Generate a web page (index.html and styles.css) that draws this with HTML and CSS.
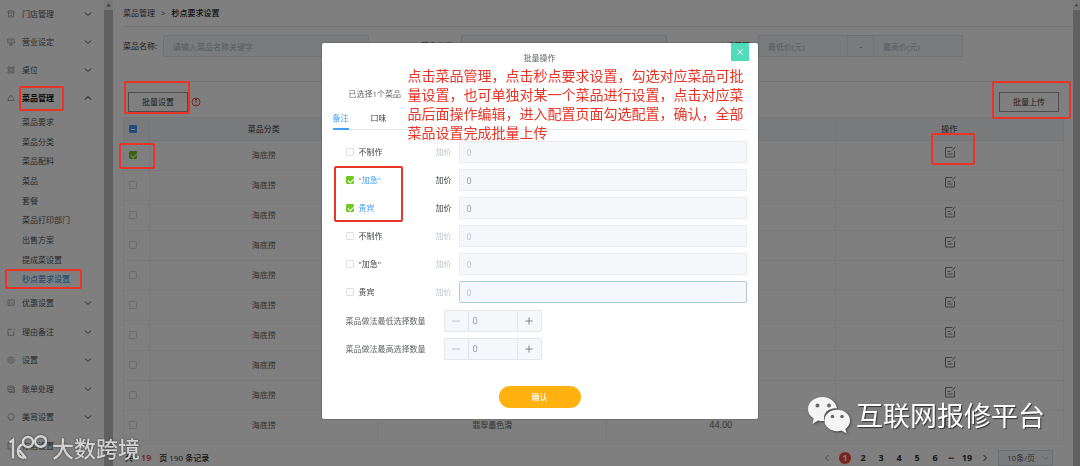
FILE: index.html
```html
<!DOCTYPE html>
<html>
<head>
<meta charset="utf-8">
<title>秒点要求设置</title>
<link rel="stylesheet" href="styles.css">
</head>
<body>
<svg class="defs" aria-hidden="true">
  <symbol id="down" viewBox="0 0 8 8"><path d="M1 2.5 4 5.5 7 2.5"/></symbol>
  <symbol id="up" viewBox="0 0 8 8"><path d="M1 5.5 4 2.5 7 5.5"/></symbol>
  <symbol id="edit" viewBox="0 0 12 12"><path d="M8.500 1.500H1.500v9.500H10.500V5M11.500.6 8 4.600M3.500 5.500h3M3.500 8h5"/></symbol>
</svg>

<div class="app">
  <nav class="sidebar">
    <div class="menu">
      <button class="group"><svg class="ico" viewBox="0 0 8 8"><path d="M1 1h6v2H1zM1.500 3v4h5V3M3 5l1 1 1-1"/></svg><span>门店管理</span><svg class="chev"><use href="#down"/></svg></button>
      <button class="group"><svg class="ico" viewBox="0 0 8 8"><path d="M.8 1h6.500v4H.8zM4 5v2M2 7h4M2.500 3h3"/></svg><span>营业设定</span><svg class="chev"><use href="#down"/></svg></button>
      <button class="group"><svg class="ico" viewBox="0 0 8 8"><path d="M1 1h2.200v2.200H1zM4.800 1H7v2.200H4.800zM1 4.800h2.200V7H1zM4.800 4.800H7V7H4.800z"/></svg><span>桌位</span><svg class="chev"><use href="#down"/></svg></button>
      <button class="group active"><svg class="ico" viewBox="0 0 8 8"><path d="M.5 6.500h7M1.200 6.300C1.200 3.500 2.500 2 4 2s2.800 1.500 2.800 4.300M4 2V1"/></svg><span class="mark mark-menu">菜品管理</span><svg class="chev"><use href="#up"/></svg></button>
    </div>
    <div class="submenu">
      <a href="#">菜品要求</a><a href="#">菜品分类</a><a href="#">菜品配料</a><a href="#">菜品</a><a href="#">套餐</a><a href="#">菜品打印部门</a><a href="#">出售方案</a><a href="#">提成菜设置</a><a href="#" class="current"><span class="mark mark-sub">秒点要求设置</span></a>
    </div>
    <div class="menu lower">
      <button class="group"><svg class="ico" viewBox="0 0 8 8"><path d="M1 1h6.200v5.200H1zM2 3h2M2 4.700h1M5 3v2"/></svg><span>优惠设置</span><svg class="chev"><use href="#down"/></svg></button>
      <button class="group"><svg class="ico" viewBox="0 0 8 8"><path d="M5 1.300H1V7.300h5.800V3.500M7.200.8v1.200"/></svg><span>理由备注</span><svg class="chev"><use href="#down"/></svg></button>
      <button class="group"><svg class="ico" viewBox="0 0 8 8"><path d="M4 .7 7 2.400v3.400L4 7.500 1 5.800V2.400z"/><circle cx="4" cy="4.100" r="1.300"/></svg><span>设置</span><svg class="chev"><use href="#down"/></svg></button>
      <button class="group"><svg class="ico" viewBox="0 0 8 8"><path d="M1 1h5v5.500H1zM6 2.500h1.300v5H2.500v-1M2 2.700h3M2 4.500h3"/></svg><span>账单处理</span><svg class="chev"><use href="#down"/></svg></button>
      <button class="group"><svg class="ico" viewBox="0 0 8 8"><path d="M2 7V4.800C.2 4.300.5 1.700 2.400 2 3-.1 5.200-.1 5.700 2c1.900-.3 2.100 2.300.4 2.800V7z"/></svg><span>美宵设置</span><svg class="chev"><use href="#down"/></svg></button>
      <button class="group"><svg class="ico" viewBox="0 0 8 8"><path d="M1 1h6v6H1z"/></svg><span>存酒设置</span></button>
    </div>
  </nav>
  <div class="scrollbar"><svg viewBox="0 0 9 10"><path d="M2 6.500 4.500 3.500 7 6.500z"/></svg><i></i></div>

  <main class="content">
    <div class="crumbs"><a href="#">菜品管理</a><span class="sep">&gt;</span><b>秒点要求设置</b></div>
    <form class="filters">
      <div class="field"><label for="name">菜品名称:</label><input id="name" placeholder="请输入菜品名称关键字"></div>
      <div class="field"><label for="cat">菜品分类:</label><input id="cat" placeholder="请选择"></div>
      <div class="field"><label for="low">价格范围:</label><div class="range"><input id="low" placeholder="最低价(元)"><span>-</span><input aria-label="最高价" placeholder="最高价(元)"></div></div>
    </form>
    <div class="toolbar">
      <span class="mark mark-set"><button class="plain">批量设置</button></span>
      <svg class="info" viewBox="0 0 10 10"><circle cx="5" cy="5" r="4"/><path d="M5 2.300v3.700M5 7v1M4 2.500h2"/></svg>
      <span class="mark mark-upload"><button class="plain">批量上传</button></span>
    </div>
    <table class="list">
      <colgroup><col class="c-check"><col><col><col><col></colgroup>
      <thead><tr><th><input type="checkbox" class="all" aria-label="全选"></th><th>菜品分类</th><th></th><th></th><th>操作</th></tr></thead>
      <tbody>
        <tr><td><span class="mark mark-check"><input type="checkbox" aria-label="选择" checked></span></td><td>海底捞</td><td></td><td></td><td><button class="edit mark mark-edit" aria-label="编辑"><svg><use href="#edit"/></svg></button></td></tr>
        <tr><td><input type="checkbox" aria-label="选择"></td><td>海底捞</td><td></td><td></td><td><button class="edit" aria-label="编辑"><svg><use href="#edit"/></svg></button></td></tr>
        <tr><td><input type="checkbox" aria-label="选择"></td><td>海底捞</td><td></td><td></td><td><button class="edit" aria-label="编辑"><svg><use href="#edit"/></svg></button></td></tr>
        <tr><td><input type="checkbox" aria-label="选择"></td><td>海底捞</td><td></td><td></td><td><button class="edit" aria-label="编辑"><svg><use href="#edit"/></svg></button></td></tr>
        <tr><td><input type="checkbox" aria-label="选择"></td><td>海底捞</td><td></td><td></td><td><button class="edit" aria-label="编辑"><svg><use href="#edit"/></svg></button></td></tr>
        <tr><td><input type="checkbox" aria-label="选择"></td><td>海底捞</td><td></td><td></td><td><button class="edit" aria-label="编辑"><svg><use href="#edit"/></svg></button></td></tr>
        <tr><td><input type="checkbox" aria-label="选择"></td><td>海底捞</td><td></td><td></td><td><button class="edit" aria-label="编辑"><svg><use href="#edit"/></svg></button></td></tr>
        <tr><td><input type="checkbox" aria-label="选择"></td><td>海底捞</td><td></td><td></td><td><button class="edit" aria-label="编辑"><svg><use href="#edit"/></svg></button></td></tr>
        <tr><td><input type="checkbox" aria-label="选择"></td><td>海底捞</td><td></td><td></td><td><button class="edit" aria-label="编辑"><svg><use href="#edit"/></svg></button></td></tr>
        <tr><td><input type="checkbox" aria-label="选择"></td><td>海底捞</td><td>翡翠墨色滑</td><td class="num">44.00</td><td><button class="edit" aria-label="编辑"><svg><use href="#edit"/></svg></button></td></tr>
      </tbody>
    </table>
    <div class="pager">
      <p>共<em>19</em>页 190 条记录</p>
      <div class="pages">
        <button class="dim" aria-label="上一页"><svg viewBox="0 0 8 8"><path d="M5.500 1 2.500 4l3 3"/></svg></button>
        <button class="on">1</button><button>2</button><button>3</button><button>4</button><button>5</button><button>6</button><span>•••</span><button>19</button>
        <button aria-label="下一页"><svg viewBox="0 0 8 8"><path d="M2.500 1 5.500 4l-3 3"/></svg></button>
      </div>
      <div class="size"><select aria-label="每页条数"><option>10条/页</option></select><svg class="chev"><use href="#down"/></svg></div>
    </div>
  </main>
  <div class="scrollbar right"><svg viewBox="0 0 9 10"><path d="M2 6.500 4.500 3.500 7 6.500z"/></svg><i></i></div>
</div>

<div class="mask">
  <section class="dialog" role="dialog" aria-labelledby="title">
    <h1 id="title">批量操作</h1>
    <button class="close" aria-label="关闭"><svg viewBox="0 0 18 18"><path d="m6 6 6 6M12 6l-6 6"/></svg></button>
    <p class="picked">已选择1个菜品</p>
    <div class="tabs"><button class="sel">备注</button><button>口味</button></div>
    <div class="options">
      <div class="opt off"><label><input type="checkbox">不制作</label><label class="price" for="p1">加价</label><input class="amount" id="p1" value="0"></div>
      <div class="opt chosen"><label><input type="checkbox" checked>"加急"</label><label class="price" for="p2">加价</label><input class="amount" id="p2" value="0"></div>
      <div class="opt chosen"><label><input type="checkbox" checked>贵宾</label><label class="price" for="p3">加价</label><input class="amount" id="p3" value="0"></div>
      <div class="opt off"><label><input type="checkbox">不制作</label><label class="price" for="p4">加价</label><input class="amount" id="p4" value="0"></div>
      <div class="opt off"><label><input type="checkbox">"加急"</label><label class="price" for="p5">加价</label><input class="amount" id="p5" value="0"></div>
      <div class="opt off"><label><input type="checkbox">贵宾</label><label class="price" for="p6">加价</label><input class="amount focus" id="p6" value="0"></div>
      <div class="box" aria-hidden="true"></div>
    </div>
    <div class="limits">
      <div class="limit"><label for="min">菜品做法最低选择数量</label><div class="stepper"><button class="dim" aria-label="减少"><svg viewBox="0 0 8 8"><path d="M0 4h8"/></svg></button><input id="min" value="0"><button aria-label="增加"><svg viewBox="0 0 8 8"><path d="M.5 4h7M4 .5v7"/></svg></button></div></div>
      <div class="limit"><label for="max">菜品做法最高选择数量</label><div class="stepper"><button class="dim" aria-label="减少"><svg viewBox="0 0 8 8"><path d="M0 4h8"/></svg></button><input id="max" value="0"><button aria-label="增加"><svg viewBox="0 0 8 8"><path d="M.5 4h7M4 .5v7"/></svg></button></div></div>
    </div>
    <button class="confirm">确认</button>
    <p class="note">点击菜品管理，点击秒点要求设置，勾选对应菜品可批<br>量设置，也可单独对某一个菜品进行设置，点击对应菜<br>品后面操作编辑，进入配置页面勾选配置，确认，全部<br>菜品设置完成批量上传</p>
  </section>
</div>

<div class="brand brand-left">
  <svg viewBox="0 0 38 26"><path d="M.5 8.500 4 6v18.500M14.500 10C7.500 12 6.500 22.500 15 24M8 17h3l6 7.500"/><circle cx="19" cy="8" r="5"/><path d="M27 4.500C30 .5 37 2 37 7.500s-7 7-10 3c-1-1.500-1-4.500 0-6z"/></svg>
  <span>大数跨境</span>
</div>
<div class="brand brand-right">
  <svg viewBox="0 0 44 38"><path d="M15.500 1C7.500 1 1 6.200 1 13c0 4 2.200 7.200 5.700 9.500L5.500 28l5.500-3.500c1.500.4 3 .6 4.500.6h2C15 17 22 11.500 30 12.200 28.500 5.500 22.500 1 15.500 1z"/><path d="M43 24.500c0-6-5.800-10.800-12.800-10.800S17.500 18.500 17.500 24.500s5.700 10.700 12.700 10.700c1.500 0 3-.2 4.400-.6l5 2.900-1.200-4.500C41.300 31 43 28 43 24.500z"/><g><circle cx="10.500" cy="9.500" r="2"/><circle cx="22" cy="9.500" r="2"/><circle cx="25.500" cy="20.500" r="1.800"/><circle cx="35" cy="20.500" r="1.800"/></g></svg>
  <span>互联网报修平台</span>
</div>
</body>
</html>
```
FILE: styles.css
```css
* { box-sizing: border-box; }
body {
  margin: 0;
  height: 100vh;
  overflow: hidden;
  font: 8px/12px "Open Sans", "Noto Sans CJK SC", sans-serif;
  color: #606266;
  background: #fff;
}
button, input, select { font: inherit; color: inherit; margin: 0; padding: 0; border: 0; background: none; }
button { cursor: pointer; }
a { color: inherit; text-decoration: none; }
p, h1 { margin: 0; font-size: inherit; font-weight: 400; }
svg { fill: none; stroke: currentColor; display: block; flex: none; }
.defs { position: absolute; width: 0; height: 0; }
input::placeholder { color: #b4b8c0; opacity: 1; }

.app { display: flex; height: 100vh; overflow: hidden; }

/* Sidebar */
.sidebar { width: 104px; flex: none; overflow: hidden; color: #505256; }
.group { display: flex; align-items: center; width: 100%; height: 28px; padding: 0 12px 0 7px; text-align: left; }
.group .ico { width: 8px; height: 8px; margin-right: 7px; color: #8a8c90; stroke-width: .7; }
.group span { flex: none; }
.chev { width: 8px; height: 8px; margin-left: auto; }
.group.active { color: #101010; font-weight: 700; }
.submenu { display: flex; flex-direction: column; height: 177px; padding-left: 22px; }
.submenu a { flex: 1; display: flex; align-items: center; }
.submenu .current { color: #2b85e4; }
.lower { display: grid; grid-auto-rows: 1fr; height: 171px; }
.lower .group { height: auto; }

.scrollbar { width: 9px; flex: none; display: flex; flex-direction: column; background: #f1f1f1; }
.scrollbar svg { width: 9px; height: 10px; fill: #808080; stroke: none; }
.scrollbar i { flex: 1; background: #c1c1c1; }
.scrollbar.right { width: 7px; }
.scrollbar.right svg { width: 7px; }

/* Red call-out frames around controls */
.mark { position: relative; }
.mark::after, .box { content: ""; position: absolute; border: 2px solid #e93427; border-radius: 2px; pointer-events: none; }
.mark::after { z-index: 4; }

/* Main area */
.content { flex: 1; min-width: 0; padding: 0 9px 0 10px; }
.crumbs { display: flex; align-items: center; gap: 6px; height: 27px; margin-right: -9px; border-bottom: 1px solid #e8ebef; color: #404246; }
.crumbs b { color: #202020; font-weight: 500; }
.filters { display: grid; grid-template-columns: 298px 297px auto; padding: 8px 0 24px; margin-right: -9px; border-bottom: 1px solid #e8ebef; }
.field { display: flex; align-items: center; }
.field label { width: 40px; color: #404246; }
.field input { height: 22px; width: 206px; padding: 0 9px; background: #f3f6f9; border: 1px solid #e2e6ec; border-radius: 2px; }
.range { display: flex; }
.field .range input { width: 90px; border-radius: 0; }
.range span { width: 25px; height: 22px; line-height: 20px; text-align: center; background: #f3f6f9; border: solid #dce0e8; border-width: 1px 0; }
.toolbar { display: flex; align-items: center; height: 35px; padding: 5px 5px 0; }
.plain { display: block; width: 60px; height: 20px; border: 1px solid #999; color: #404040; }
.info { width: 10px; height: 10px; margin-left: 3px; color: #e02020; stroke-width: .8; }
.mark-upload { margin-left: auto; }

.list { width: 100%; table-layout: fixed; border-collapse: collapse; }
.c-check { width: 26px; }
.list th, .list td { padding: 0; text-align: center; font-weight: 400; border: 1px solid #eef2f6; }
.list th { height: 23px; background: #f0f4f8; font-weight: 500; border-color: #e8ecf0; }
.list td { height: 30px; padding-bottom: 1px; }
.list th:first-child, .list td:first-child { padding-right: 7px; }
.list .num { font-size: 9px; }
input[type=checkbox] { appearance: none; display: block; width: 8px; height: 8px; border: 1px solid #dcdfe6; border-radius: 1px; background: #fff; flex: none; }
.list input[type=checkbox] { margin: 0 auto; }
input[type=checkbox]:checked { border-color: #70c922; background: #70c922; }
input[type=checkbox]:checked::before { content: ""; display: block; width: 5px; height: 3px; margin: 1px 0 0 1px; border: solid #fff; border-width: 0 0 1px 1px; rotate: -45deg; }
.list input.all { border-color: #409eff; background: #409eff; }
.all::before { content: ""; display: block; width: 4px; height: 1px; margin: 3px 1px; background: #fff; }
.mark-check { display: block; width: 8px; margin: 0 auto; }
.edit { display: block; margin: 0 auto; padding: 0 0 6px 2px; color: #606060; }
.edit svg { width: 12px; height: 12px; stroke-width: .8; }

.pager { display: flex; align-items: center; height: 33px; padding: 0 11px 0 2px; }
.pager p { white-space: pre; color: #303030; font-size: 8px; font-weight: 500; }
.pager em { margin: 0 8px; color: #e04040; font-style: normal; font-weight: 600; font-size: 9px; }
.pages { display: flex; align-items: center; margin-left: auto; font-size: 9px; font-weight: 700; color: #303133; }
.pages button, .pages span { width: 18px; height: 12px; line-height: 12px; display: grid; place-items: center; }
.pages span { width: 14px; font-size: 5px; }
.pages svg { width: 8px; height: 8px; }
.pages .dim { color: #909090; }
.pages .on { width: 12px; margin: 0 3px; border-radius: 50%; background: #f5483b; color: #fff; }
.size { display: flex; align-items: center; width: 55px; height: 16px; margin-left: 4px; padding: 0 3px 0 8px; border: 1px solid #dcdfe6; background: #f5f7fa; }
.size select { appearance: none; width: 32px; flex: none; }
.size .chev { width: 7px; color: #b0b4bc; }

.mark-menu::after { inset: -6px -10px -7px -3px; }
.mark-sub::after { inset: -4px -12px -4px -17px; }
.mark-set::after { inset: -11px -2px -2px -4px; }
.mark-upload::after { inset: -11px -12px -7px -7px; }
.mark-check::after { inset: -8px -18px -10px -10px; }
.mark-edit::after { inset: -13px -19px -1px -11px; }

/* Dialog */
.mask { position: fixed; inset: 0; z-index: 2; display: flex; justify-content: center; align-items: flex-start; padding: 43px 1px 0 0; background: rgba(0, 0, 0, .5); }
.dialog { position: relative; width: 436px; padding: 9px 11px; background: #fff; border-radius: 2px; box-shadow: 0 0 2px #0006; }
.dialog h1 { text-align: center; line-height: 12px; }
.close { position: absolute; top: 0; right: 9px; width: 18px; height: 18px; background: #4fdcbb; color: #fff; }
.close svg { width: 18px; height: 18px; }
.picked { padding: 24px 16px 12px; }
.tabs { display: flex; gap: 22px; border-bottom: 1px solid #e4e7ed; }
.tabs button { height: 18px; line-height: 12px; padding-bottom: 4px; margin-bottom: -1px; color: #404040; border-bottom: 2px solid transparent; }
.tabs .sel { color: #409eff; border-color: #409eff; }
.options { position: relative; display: grid; gap: 6px; padding: 11px 0 7px 13px; }
.opt { display: flex; align-items: center; color: #404246; }
.opt label { display: flex; align-items: center; gap: 5px; width: 90px; }
.opt .price { width: 23px; }
.opt.chosen label:first-child { color: #409eff; }
.opt.off .price, .opt.off .amount { color: #c0c4cc; }
.amount { flex: 1; min-width: 0; height: 22px; padding: 0 7px; border: 1px solid #e8ebf0; border-radius: 2px; background: #f5f7fa; color: #909399; font-size: 9px; }
.amount.focus { border-color: #a8cbe0; }
.box { left: 1px; top: 36px; width: 69px; height: 56px; }
.limits { display: grid; gap: 6px; padding-left: 13px; }
.limit { display: flex; align-items: center; }
.limit label { width: 98px; }
.stepper { display: flex; width: 98px; height: 22px; border: 1px solid #e4e7ed; border-radius: 2px; background: #f5f7fa; overflow: hidden; }
.stepper button { width: 23px; display: grid; place-items: center; color: #808288; }
.stepper svg { width: 8px; height: 8px; }
.stepper .dim { color: #c0c4cc; }
.stepper input { flex: 1; min-width: 0; padding: 0 4px; border: solid #e0e4ea; border-width: 0 1px; color: #909399; font-size: 9px; }
.confirm { display: block; width: 82px; height: 22px; margin: 26px auto 2px; border-radius: 11px; background: #ffb10f; color: #fff; font-weight: 500; }
.note { position: absolute; left: 86px; top: 23px; font-size: 14px; line-height: 19px; color: #e93427; white-space: nowrap; font-family: "Noto Sans CJK SC", sans-serif; }

/* Corner brands */
.brand { position: fixed; z-index: 5; display: flex; align-items: center; font-family: "Noto Sans CJK SC", sans-serif; }
.brand-left { left: 9px; bottom: 6px; gap: 5px; color: #d2d2d2; font-size: 22px; font-weight: 500; line-height: 26px; text-shadow: 0 0 2px #333; }
.brand-left svg { width: 38px; height: 26px; stroke-width: 2.5; filter: drop-shadow(0 0 1px #333); }
.brand-right { right: 35px; bottom: 32px; gap: 5px; color: #fff; font-size: 27px; line-height: 34px; text-shadow: 1px 1px 1px #333; }
.brand-right svg { width: 44px; height: 38px; fill: #f4f4f4; stroke: none; filter: drop-shadow(1px 1px 1px #444); }
.brand-right g { fill: #666; }
```
